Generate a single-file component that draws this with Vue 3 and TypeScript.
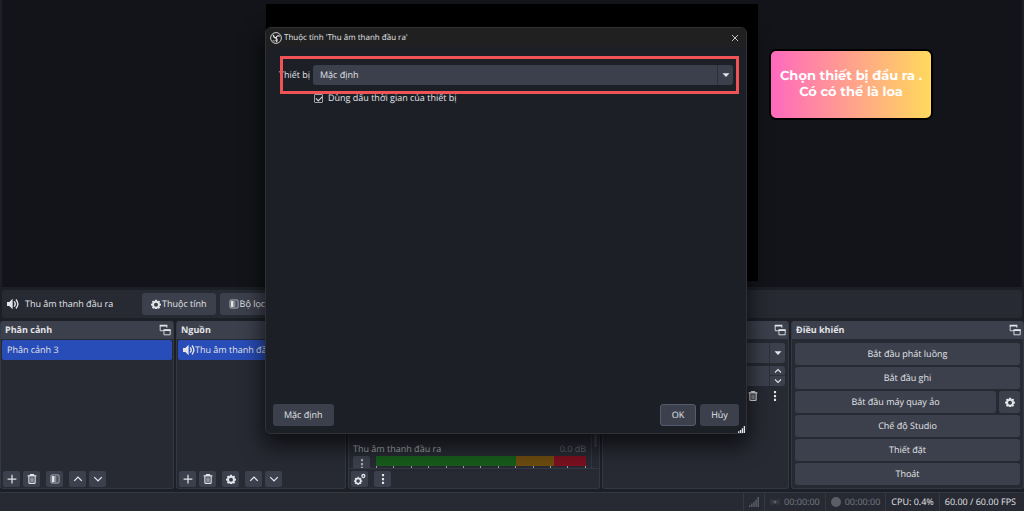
<script setup lang="ts">
import { h, ref, type FunctionalComponent } from 'vue'

interface Shape { d: string; stroke?: number; opacity?: number }

const gear = 'M6.6 1h2.8l.4 1.9 1.2.5 1.7-1 1.9 1.9-1 1.7.5 1.2 1.9.4v2.8l-1.9.4-.5 1.2 1 1.7-1.9 1.9-1.7-1-1.2.5-.4 1.9H6.6l-.4-1.9-1.2-.5-1.7 1-1.9-1.9 1-1.7-.5-1.2L0 10.400V7.600l1.900-.4.5-1.200-1-1.700 1.900-1.900 1.700 1 1.200-.5zM8 5.800a3.200 3.200 0 1 0 0 6.400 3.200 3.200 0 0 0 0-6.400z'

const shapes: Record<string, Shape[]> = {
  plus: [{ d: 'M8 1v14M1 8h14', stroke: 2 }],
  trash: [
    { d: 'M1 3h14M5.500 3V1h5v2M3 4v9.500q0 1.500 1.500 1.500h7q1.500 0 1.500-1.500V4', stroke: 1.8 },
    { d: 'M5.200 5.500h5.600v7.300H5.200z', opacity: 0.5 },
  ],
  filter: [
    { d: 'M3 1.500h10q1.500 0 1.500 1.500v10q0 1.500-1.500 1.500H3q-1.500 0-1.500-1.500V3q0-1.500 1.500-1.500z', stroke: 1.4, opacity: 0.75 },
    { d: 'M3 3h4v10H3z' },
    { d: 'M7 3h2.500v10H7z', opacity: 0.5 },
    { d: 'M9.500 3H12v10H9.500z', opacity: 0.2 },
  ],
  up: [{ d: 'M2 11l6-6 6 6', stroke: 2.2 }],
  down: [{ d: 'M2 5l6 6 6-6', stroke: 2.2 }],
  gear: [{ d: gear }],
  dots: [{ d: 'M6.300 0h3.400v3.700H6.300zM6.300 6.200h3.400v3.700H6.300zM6.300 12.300h3.400V16H6.300z' }],
  popout: [
    { d: 'M1 1h10v2.200H1z' },
    { d: 'M6 9H1.600V2H10.500v3', stroke: 1.2 },
    { d: 'M6 7h9.500v2.200H6z' },
    { d: 'M6.600 8h8.300v6.400H6.600z', stroke: 1.2 },
  ],
  speaker: [
    { d: 'M0 5.300h3L7.500 1v14L3 10.700H0z' },
    { d: 'M9.500 4.500q3 3.500 0 7M12 2q5 6 0 12', stroke: 1.9 },
  ],
  caret: [{ d: 'M1 4.500h14L8 12z' }],
  signal: [{ d: 'M0 13h2.300v3H0zM3.400 10.500h2.300V16H3.400zM6.800 7.500h2.300V16H6.800zM10.200 4h2.300v12h-2.300zM13.600 0h2.300v16h-2.300z' }],
  grip: [{ d: 'M0 12h3v4H0zM4.300 9h3v7h-3zM8.600 5h3v11h-3zM13 0h3v16h-3z' }],
  gears: [
    { d: 'M5.500 7.200a3.500 3.500 0 1 0 0 7 3.500 3.500 0 0 0 0-7z', stroke: 2.4 },
    { d: 'M5.500 5v2M5.500 14.400v1.600M0 10.700h2M9 10.700h2M1.600 6.800l1.300 1.300M8.200 13.300l1.300 1.300M1.600 14.600l1.300-1.300M8.200 8.100l1.300-1.300', stroke: 1.6 },
    { d: 'M12.500 2a2 2 0 1 0 0 4 2 2 0 0 0 0-4z', stroke: 1.7 },
  ],
  live: [
    { d: 'M8 5.200a2.800 2.800 0 1 0 0 5.600 2.800 2.800 0 0 0 0-5.600z' },
    { d: 'M4.200 4q-3 4 0 8M11.800 4q3 4 0 8', stroke: 1.2, opacity: 0.7 },
    { d: 'M2 2.500q-4 5.500 0 11M14 2.500q4 5.500 0 11', stroke: 1, opacity: 0.4 },
  ],
  record: [{ d: 'M8 0a8 8 0 1 0 0 16A8 8 0 0 0 8 0z' }],
  close: [{ d: 'M2 2l12 12M14 2L2 14', stroke: 1.7 }],
  obs: [
    { d: 'M8 .8a7.200 7.200 0 1 0 0 14.400A7.200 7.200 0 0 0 8 .8z', stroke: 1.2 },
    { d: 'M4.500 3.500q0 4 3.500 4.500M13 5.500q-4-1.500-5 2.500M8.500 13.500q2-3-.5-5.500', stroke: 1.7 },
    { d: 'M3.500 11.500q3 1.500 4.500-1', stroke: 1 },
  ],
}

const Icon: FunctionalComponent<{ name: string }> = (props) =>
  h('svg', { viewBox: '0 0 16 16', 'aria-hidden': 'true' }, (shapes[props.name] ?? []).map((s) =>
    h('path', {
      d: s.d,
      fill: s.stroke ? 'none' : 'currentColor',
      'fill-rule': 'evenodd',
      stroke: s.stroke ? 'currentColor' : 'none',
      'stroke-width': s.stroke,
      opacity: s.opacity,
    })))
Icon.props = ['name']

const device = ref('default')
const useTimestamps = ref(true)
const duration = ref('')
const sceneTools = [['plus', 'Thêm'], ['trash', 'Xóa'], ['filter', 'Bộ lọc'], ['up', 'Lên'], ['down', 'Xuống']]
const sourceTools = [['plus', 'Thêm'], ['trash', 'Xóa'], ['gear', 'Thuộc tính'], ['up', 'Lên'], ['down', 'Xuống']]
</script>

<template>
  <div class="window">
    <main class="preview"><div class="canvas"></div></main>

    <section class="source-bar">
      <Icon name="speaker" class="i12" />
      <span class="source-name">Thu âm thanh đầu ra</span>
      <button class="btn"><Icon name="gear" class="i10" />Thuộc tính</button>
      <button class="btn"><Icon name="filter" class="i10" />Bộ lọc</button>
    </section>

    <div class="docks">
      <section class="dock">
        <header><h2>Phân cảnh</h2><Icon name="popout" class="i12" /></header>
        <ul class="list"><li>Phân cảnh 3</li></ul>
        <div class="tools">
          <button v-for="[icon, label] in sceneTools" :key="icon" :class="['tool', icon]" :aria-label="label"><Icon :name="icon" class="i10" /></button>
        </div>
      </section>

      <section class="dock">
        <header><h2>Nguồn</h2><Icon name="popout" class="i12" /></header>
        <ul class="list"><li><Icon name="speaker" class="i12" />Thu âm thanh đầu ra</li></ul>
        <div class="tools">
          <button v-for="[icon, label] in sourceTools" :key="icon" :class="['tool', icon]" :aria-label="label"><Icon :name="icon" class="i10" /></button>
        </div>
      </section>

      <section class="dock">
        <header></header>
        <div class="mixer">
          <div class="channel">
            <div class="channel-head"><span>Thu âm thanh đầu ra</span><span class="level">0.0 dB</span></div>
            <div class="channel-body">
              <button class="tool" aria-label="Tùy chọn kênh"><Icon name="dots" class="i10" /></button>
              <div class="meter">
                <div class="bars"><i class="green"></i><i class="yellow"></i><i class="red"></i></div>
                <div class="ticks"><i v-for="n in 13" :key="n"></i></div>
              </div>
            </div>
          </div>
          <div class="scroll"><i></i></div>
        </div>
        <div class="tools">
          <button class="tool" aria-label="Thuộc tính âm thanh"><Icon name="gears" class="i12" /></button>
          <button class="tool up" aria-label="Tùy chọn"><Icon name="dots" class="i10" /></button>
        </div>
      </section>

      <section class="dock">
        <header><h2></h2><Icon name="popout" class="i12" /></header>
        <div class="transitions">
          <div class="field">
            <select aria-label="Hiệu ứng"><option></option></select>
            <span class="arrow"><Icon name="caret" class="i8" /></span>
          </div>
          <div class="field">
            <input v-model="duration" type="text" aria-label="Thời lượng" />
            <span class="arrow spin"><Icon name="up" class="i8" /><Icon name="down" class="i8" /></span>
          </div>
          <div class="row-icons">
            <button class="flat" aria-label="Xóa"><Icon name="trash" class="i10" /></button>
            <button class="flat" aria-label="Tùy chọn"><Icon name="dots" class="i10" /></button>
          </div>
        </div>
      </section>

      <section class="dock">
        <header><h2>Điều khiển</h2><Icon name="popout" class="i12" /></header>
        <div class="controls">
          <button class="btn">Bắt đầu phát luồng</button>
          <button class="btn">Bắt đầu ghi</button>
          <div class="pair">
            <button class="btn">Bắt đầu máy quay ảo</button>
            <button class="btn" aria-label="Cấu hình máy quay ảo"><Icon name="gear" class="i10" /></button>
          </div>
          <button class="btn">Chế độ Studio</button>
          <button class="btn">Thiết đặt</button>
          <button class="btn">Thoát</button>
        </div>
      </section>
    </div>

    <footer class="status">
      <span class="dim"><Icon name="signal" class="i10" /></span>
      <span class="dim"><Icon name="live" class="i10" />00:00:00</span>
      <span class="dim"><Icon name="record" class="i10" />00:00:00</span>
      <span>CPU: 0.4%</span>
      <span class="fps">60.00 / 60.00 FPS</span>
    </footer>

    <div class="dialog" role="dialog" aria-labelledby="dialog-title">
      <header class="titlebar">
        <Icon name="obs" class="i12" />
        <h1 id="dialog-title">Thuộc tính 'Thu âm thanh đầu ra'</h1>
        <button class="flat" aria-label="Đóng"><Icon name="close" class="i8" /></button>
      </header>
      <form class="form" @submit.prevent>
        <label for="device">Thiết bị</label>
        <div class="field">
          <select id="device" v-model="device"><option value="default">Mặc định</option></select>
          <span class="arrow"><Icon name="caret" class="i8" /></span>
        </div>
        <label class="check"><input v-model="useTimestamps" type="checkbox" />Dùng dấu thời gian của thiết bị</label>
      </form>
      <div class="highlight"></div>
      <div class="actions">
        <button class="btn">Mặc định</button>
        <button class="btn ok">OK</button>
        <button class="btn cancel">Hủy</button>
      </div>
      <Icon name="grip" class="grip" />
    </div>

    <aside class="note">Chọn thiết bị đầu ra .<br />Có có thể là loa</aside>
  </div>
</template>

<style>
body { margin: 0; background: #1d1f26; }
</style>

<style scoped>
* { box-sizing: border-box; }
.window {
  position: relative;
  display: flex;
  flex-direction: column;
  min-height: 100vh;
  overflow: hidden;
  background: #1d1f26;
  color: #e3e4e8;
  font: 9px/12px "Open Sans", "Noto Sans", sans-serif;
  text-rendering: geometricPrecision;
}
svg { flex: none; display: block; }
.i8 { width: 8px; height: 8px; }
.i10 { width: 10px; height: 10px; }
.i12 { width: 12px; height: 12px; }
button, input, select { margin: 0; padding: 0; border: 0; color: inherit; font: inherit; text-rendering: inherit; }
h1, h2 { margin: 0; font-size: inherit; }
.btn {
  display: flex;
  align-items: center;
  justify-content: center;
  gap: 1px;
  height: 22px;
  border-radius: 3px;
  background: #3c404c;
}
.flat { display: flex; background: none; }

.preview { display: flex; flex: 1; margin: 0 2px; padding: 4px 0 6px; background: #131419; }
.canvas { flex: 0 0 492px; margin: 0 auto; background: #000; }

.source-bar {
  display: flex;
  align-items: center;
  gap: 4px;
  height: 28px;
  margin: 3px 2px;
  padding: 0 5px;
  border-radius: 3px;
  background: #272a33;
}
.source-name { width: 113px; margin-left: 2px; }
.source-bar .btn { padding: 0 9px; }

.docks { display: grid; grid-template-columns: 174fr 170fr 252fr 187fr 233fr; gap: 2px; height: 168px; }
.dock {
  display: flex;
  flex-direction: column;
  min-width: 0;
  overflow: hidden;
  border: 1px solid #343843;
  border-top: 0;
  border-radius: 3px;
  background: #272a33;
}
.dock > header {
  display: flex;
  align-items: center;
  justify-content: space-between;
  flex: none;
  height: 18px;
  padding: 0 2px 0 4px;
  background: #3c404c;
}
.list { flex: 1; margin: 0; padding: 1px; list-style: none; }
.list li {
  display: flex;
  align-items: center;
  height: 20px;
  padding: 0 5px;
  border-radius: 2px;
  background: #284cb8;
  white-space: nowrap;
  overflow: hidden;
}
.tools { display: flex; gap: 3px; padding: 2px 2px 1px; }
.tool {
  display: flex;
  align-items: center;
  justify-content: center;
  flex: none;
  width: 17px;
  height: 16px;
  border-radius: 2px;
  background: #3c404c;
}
.tool.filter, .tool.gear, .tool.up { margin-left: 3px; }

.mixer { display: flex; flex: 1; align-items: flex-end; min-height: 0; border-bottom: 1px solid #343843; }
.channel { flex: 1; padding: 0 5px 0 4px; color: #a9abb1; }
.channel-head { display: flex; justify-content: space-between; }
.level { color: #666971; }
.channel-body { display: flex; gap: 6px; height: 13px; overflow: hidden; padding-top: 1px; }
.meter { flex: 1; }
.bars { display: flex; height: 10px; }
.green { flex: 140; background: #175b1b; }
.yellow { flex: 38; background: #6c4c10; }
.red { flex: 32; background: #7b1020; }
.ticks { display: flex; justify-content: space-between; }
.ticks i { width: 1px; height: 2px; background: #9a9ca2; }
.scroll { width: 8px; height: 100%; padding: 0 2px; border-left: 1px solid #343843; }
.scroll i { display: block; height: 108px; border-radius: 2px; background: #3c404c; }

.field { position: relative; display: flex; height: 20px; border-radius: 3px; overflow: hidden; background: #3c404c; }
.field select, .field input { flex: 1; min-width: 0; appearance: none; padding: 0 7px; background: transparent; }
.arrow {
  position: absolute;
  inset: 0 0 0 auto;
  display: flex;
  flex-direction: column;
  align-items: center;
  justify-content: center;
  gap: 2px;
  width: 16px;
  border-left: 1px solid #2c2f38;
  pointer-events: none;
}
.spin { background: linear-gradient(#0000 9px, #2c2f38 9px, #2c2f38 10px, #0000 10px); }
.transitions { display: flex; flex-direction: column; gap: 3px; padding: 4px 3px; }
.row-icons { display: flex; justify-content: flex-end; gap: 12px; padding: 2px 5px; }

.controls { display: flex; flex-direction: column; gap: 2px; padding: 4px 3px; }
.pair { display: grid; grid-template-columns: 1fr 21px; gap: 3px; }

.status { display: flex; justify-content: flex-end; height: 19px; margin-top: 3px; border-top: 1px solid #343843; background: #272a33; }
.status span { display: flex; align-items: center; gap: 4px; padding: 0 5px; border-left: 1px solid #343843; }
.status .dim { color: #7a7c83; }
.status .dim svg { color: #5b5e66; }
.status .fps { padding-right: 8px; }

.dialog {
  position: absolute;
  top: 27px;
  left: 265px;
  display: flex;
  flex-direction: column;
  width: 482px;
  height: 407px;
  border: 1px solid #303136;
  border-radius: 6px;
  background: #1d1f26;
  box-shadow: 0 10px 22px 2px #000a;
}
.titlebar { display: flex; align-items: center; gap: 2px; height: 19px; padding: 0 7px 0 4px; border-radius: 5px 5px 0 0; background: #202020; font-size: 8px; }
.titlebar h1 { flex: 1; font-weight: 400; }
.form { display: grid; grid-template-columns: 34px 1fr; gap: 7px 0; align-items: center; padding: 18px 13px; }
.form > label:first-child { white-space: nowrap; }
.check { grid-column: 2; display: flex; align-items: center; gap: 5px; padding-left: 1px; }
.check input { appearance: none; width: 9px; height: 9px; border: 1px solid #a0a2a8; border-radius: 1px; }
.check input:checked::after { content: ""; display: block; width: 5px; height: 3px; margin: 1px; border: solid #e3e4e8; border-width: 0 0 1px 1px; transform: rotate(-45deg); }
.highlight { position: absolute; top: 28px; left: 14px; right: 7px; height: 38px; border: 3px solid #ef5355; pointer-events: none; }
.actions { display: flex; gap: 4px; margin-top: auto; padding: 0 7px 7px; }
.actions .btn { padding: 0 11px; }
.actions .ok { width: 36px; margin-left: auto; border: 1px solid #555b6e; }
.actions .cancel { width: 39px; }
.grip { position: absolute; right: 1px; bottom: 0; width: 7px; height: 7px; }

.note {
  position: absolute;
  top: 49px;
  right: 91px;
  display: flex;
  align-items: center;
  justify-content: center;
  width: 164px;
  height: 71px;
  padding-bottom: 2px;
  border: 2px solid #000;
  border-radius: 7px;
  background: linear-gradient(90deg, #ff69bd, #ffd95c);
  color: #fff;
  font: 700 13px/16px Montserrat, Inter, sans-serif;
  text-align: center;
  white-space: nowrap;
}
</style>
